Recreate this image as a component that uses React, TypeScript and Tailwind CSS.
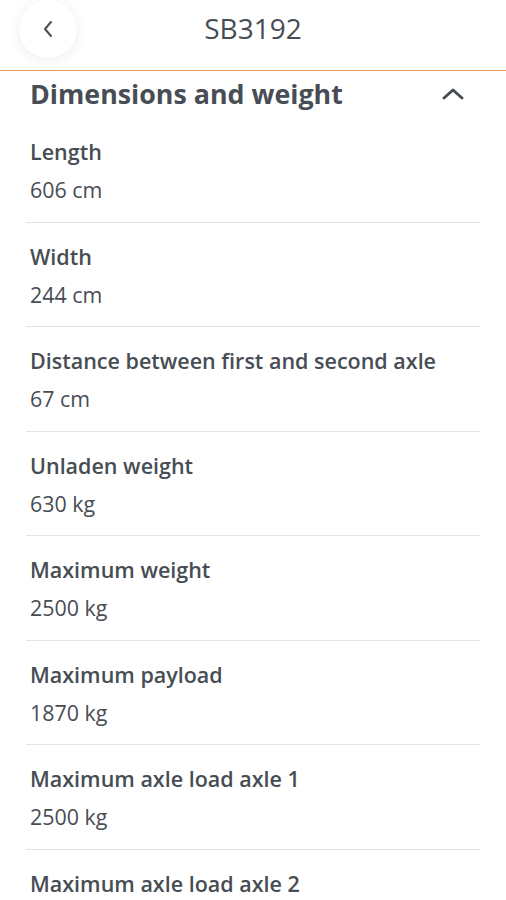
import React from "react";

const specs = [
  { label: "Length", value: "606 cm" },
  { label: "Width", value: "244 cm" },
  { label: "Distance between first and second axle", value: "67 cm" },
  { label: "Unladen weight", value: "630 kg" },
  { label: "Maximum weight", value: "2500 kg" },
  { label: "Maximum payload", value: "1870 kg" },
  { label: "Maximum axle load axle 1", value: "2500 kg" },
  { label: "Maximum axle load axle 2", value: "2500 kg" },
];

export default function App() {
  return (
    <div
      className="w-[506px] h-[900px] overflow-hidden bg-white text-[#474d54]"
      style={{ fontFamily: "'Open Sans', 'Noto Sans', sans-serif" }}
    >
      <header className="relative h-[70px] flex items-center justify-center">
        <button className="absolute left-[19px] top-0 w-[58px] h-[58px] rounded-full bg-white shadow-[0_2px_14px_rgba(0,0,0,0.08)] flex items-center justify-center">
          <svg width="14" height="22" viewBox="0 0 14 22" fill="none">
            <path d="M10 4 L4 11 L10 18" stroke="#474d54" strokeWidth="2" strokeLinecap="round" strokeLinejoin="round" />
          </svg>
        </button>
        <h1 className="text-[28px] leading-none -mt-[14px]">SB3192</h1>
      </header>
      <div className="h-px bg-[#e39a5e]" />

      <section className="px-[30px]">
        <div className="flex items-center justify-between h-[46px] pr-[10px]">
          <h2 className="text-[26.8px] font-bold">Dimensions and weight</h2>
          <svg width="26" height="16" viewBox="0 0 26 16" fill="none">
            <path d="M4 12 L13 4 L22 12" stroke="#474d54" strokeWidth="3" strokeLinecap="round" strokeLinejoin="round" />
          </svg>
        </div>
        <div className="-ml-[4px] w-[454px] mt-px">
          {specs.map((s) => (
            <div key={s.label} className="pl-[4px] pt-[20px] pb-[17.5px] border-b border-[#e4e4e4]">
              <div className="text-[21.5px] leading-[28px] font-semibold">{s.label}</div>
              <div className="text-[21.4px] leading-[28px] mt-[10px]">{s.value}</div>
            </div>
          ))}
        </div>
      </section>
    </div>
  );
}
